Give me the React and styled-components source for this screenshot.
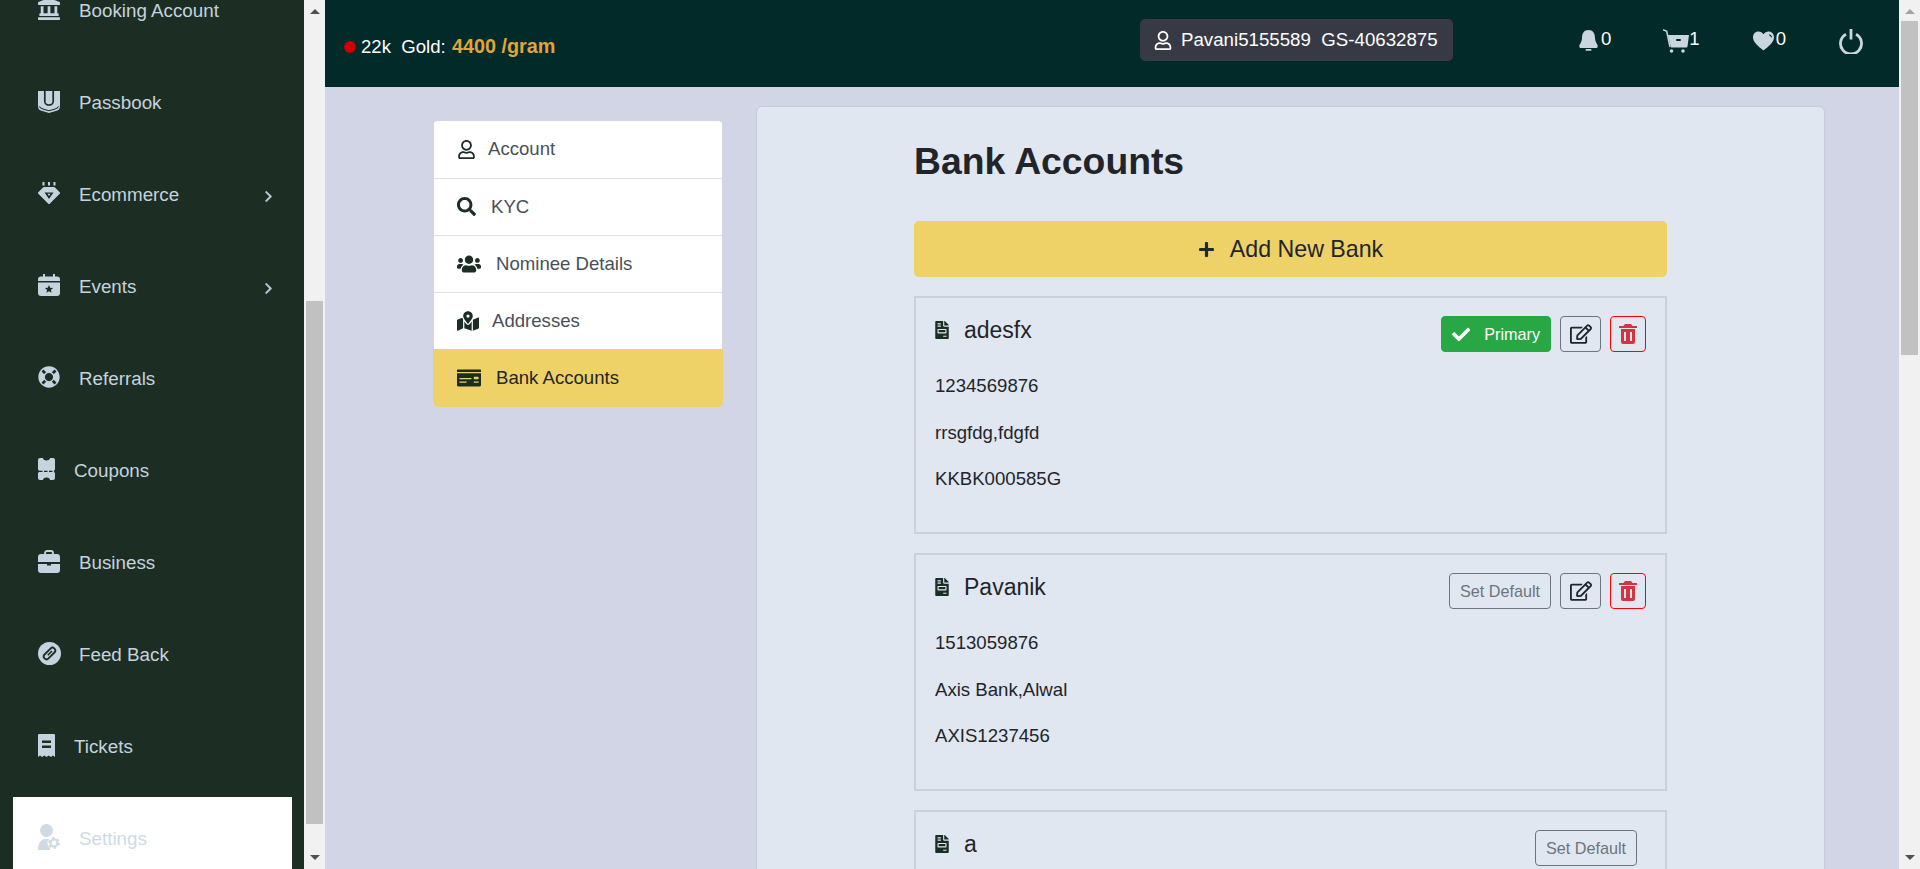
import React from 'react';
import styled, { createGlobalStyle } from 'styled-components';
import { BiSolidTrash } from 'react-icons/bi';
import {
  FaLandmark, FaLifeRing, FaChevronRight, FaRegUser, FaSearch, FaUsers, FaMapMarkedAlt, FaMoneyCheck,
  FaPlus, FaFileInvoice, FaCheck, FaRegEdit,
} from 'react-icons/fa';

const SIDE_BG = '#1c2e24';
const TOP_BG = '#012a29';

const GlobalStyle = createGlobalStyle`
  html, body { margin: 0; height: 100%; overflow: hidden; }
  body { font-family: "Liberation Sans", Arial, sans-serif; font-size: 18.6px; color: #212529; }
  * { box-sizing: border-box; }
`;

const Shell = styled.div`
  display: flex;
  height: 869px;
  overflow: hidden;
  background: #d2d5e6;
`;

const Sidebar = styled.aside`
  width: 304px;
  flex: none;
  height: 869px;
  overflow: hidden;
  background: ${SIDE_BG};
  padding: 0 12px 0 13px;
`;

const NavList = styled.ul`
  list-style: none;
  margin: -31px 0 0;
  padding: 0;
`;

const NavItem = styled.li`
  display: flex;
  align-items: center;
  height: 84px;
  margin-bottom: 8px;
  padding: 0 17px 0 25px;
  color: ${p => (p.$active ? '#d0dae4' : '#c6d2de')};
  background: ${p => (p.$active ? '#fff' : 'transparent')};
  font-size: 18.8px;
  span { flex: 1; }
  > svg { color: #b9c4cc; margin-top: 3px; }
`;

const NavIcon = styled.div`
  display: flex;
  flex: none;
  width: ${p => p.$w || 41}px;
  margin-top: -4px;
`;

const Bar = styled.div`
  width: 21px;
  flex: none;
  height: 869px;
  background: #f1f1f1;
  display: flex;
  flex-direction: column;
  align-items: center;
`;

const Arrow = styled.i`
  display: block;
  flex: none;
  width: 0;
  height: 0;
  margin: ${p => (p.$down ? '0 0 9px' : '9px 0 0')};
  border-left: 5px solid transparent;
  border-right: 5px solid transparent;
  ${p => (p.$down
    ? `border-top: 5px solid ${p.$color};`
    : `border-bottom: 5px solid ${p.$color};`)}
`;

const Thumb = styled.div`
  width: 17px;
  flex: none;
  height: ${p => p.$h}px;
  margin-top: ${p => p.$top}px;
  background: #c1c1c1;
`;

const Spacer = styled.div`
  flex: 1;
`;

const Main = styled.main`
  flex: 1;
  min-width: 0;
  height: 869px;
  overflow: hidden;
`;

const Header = styled.header`
  display: flex;
  height: 87px;
  background: ${TOP_BG};
  padding: 19px 0 0 19px;
  color: #fff;
`;

const Rate = styled.div`
  display: flex;
  align-items: center;
  width: 796px;
  height: 55px;
  white-space: pre;
`;

const Dot = styled.i`
  display: block;
  width: 12px;
  height: 12px;
  border-radius: 50%;
  background: #cc0000;
  margin-right: 5px;
`;

const Price = styled.b`
  color: #e0a43a;
  font-size: 19.8px;
  margin-left: 1px;
`;

const UserPill = styled.div`
  display: flex;
  align-items: center;
  gap: 9px;
  width: 313px;
  height: 42px;
  padding-left: 14px;
  border-radius: 5px;
  background: #373a45;
  font-size: 18.7px;
  white-space: pre;
  svg { width: 18px; height: 19px; }
`;

const Actions = styled.div`
  display: flex;
  align-items: flex-start;
  margin-left: 126px;
`;

const Action = styled.div`
  display: flex;
  align-items: center;
  height: 44px;
  gap: ${p => p.$gap || 0}px;
  margin-right: ${p => p.$mr || 0}px;
  color: #c9d5df;
`;

const Count = styled.span`
  color: #fff;
  margin-top: -4px;
`;

const Content = styled.div`
  display: flex;
  align-items: flex-start;
  padding: 20px 0 0 108px;
  gap: 34px;
`;

const SideMenu = styled.ul`
  list-style: none;
  width: 290px;
  margin: 14px 0 0;
  padding: 0;
  border-radius: 5px;
  overflow: hidden;
`;

const MenuRow = styled.li`
  display: flex;
  align-items: center;
  height: 57px;
  margin: 0 ${p => (p.$active ? 0 : 1)}px;
  padding: 0 0 1px ${p => (p.$active ? 24 : 23)}px;
  color: ${p => (p.$active ? '#212529' : '#495057')};
  background: ${p => (p.$active ? '#eed268' : '#fff')};
  border-bottom: ${p => (p.$active ? 'none' : '1px solid #dfdfe6')};
  &:first-child { height: 58px; }
  &:nth-child(4) { height: 56px; border-bottom: none; }
  &:last-child { height: 58px; }
`;

const MenuIcon = styled.span`
  display: flex;
  flex: none;
  width: ${p => p.$w}px;
  color: #1c2e24;
`;

const Panel = styled.section`
  width: 1067px;
  height: 900px;
  padding: 32px 157px 0;
  border-radius: 5px;
  background: #e1e7f0;
  box-shadow: 0 0 2px rgba(0, 0, 0, 0.15);
`;

const Title = styled.h1`
  margin: 0 0 38px;
  font-size: 37.3px;
  line-height: 44px;
  font-weight: 700;
`;

const AddButton = styled.button`
  display: flex;
  align-items: center;
  justify-content: center;
  gap: 15px;
  width: 100%;
  height: 56px;
  margin-bottom: 19px;
  border: none;
  border-radius: 5px;
  background: #eed268;
  color: #212529;
  font: inherit;
  font-size: 23.2px;
  svg { color: #1c2e24; }
`;

const Card = styled.article`
  border: 2px solid #ccd0d9;
  padding: 18px 19px 20px;
  margin-bottom: 19px;
  height: 238px;
`;

const CardHead = styled.div`
  display: flex;
  align-items: flex-start;
  height: 36px;
  margin-bottom: 20px;
`;

const CardName = styled.div`
  display: flex;
  align-items: center;
  flex: 1;
  gap: 15px;
  height: 28px;
  font-size: 23px;
  svg { color: #1c2e24; width: 14px; height: 18px; }
`;

const Btn = styled.button`
  display: flex;
  align-items: center;
  justify-content: center;
  gap: 14px;
  height: 36px;
  padding: 0 10px;
  margin-right: ${p => (p.$last ? 0 : 9)}px;
  border: 1px solid #6c757d;
  border-radius: 4px;
  background: transparent;
  color: #6c757d;
  font: inherit;
  font-size: 16.2px;
`;

const PrimaryBtn = styled(Btn)`
  width: 110px;
  border-color: #28a745;
  background: #28a745;
  color: #fff;
`;

const EditBtn = styled(Btn)`
  width: 41px;
  padding: 0;
  color: #212529;
`;

const TrashBtn = styled(Btn)`
  width: 36px;
  padding: 0;
  border-color: #f00;
  color: #d4333f;
`;

const Line = styled.p`
  margin: 0 0 19px;
  line-height: 27.6px;
`;

const Passbook = () => (
  <svg width="22" height="23" viewBox="0 0 22 23">
    <path fill="currentColor" d="M0 1h22v15c0 3-1.5 4-3.5 4.8L11 23l-7.5-2.2C1.5 20 0 19 0 16z" />
    <path fill="none" stroke={SIDE_BG} strokeWidth="1.7" d="M6.8 0v11.5c0 2 2.2 3.5 4.2 3.5s4.2-1.5 4.2-3.5V0" />
    <path fill="none" stroke={SIDE_BG} strokeWidth="1.1" d="M1.3 16.5c1 1.5 2.2 2.2 4.2 2.7l5.5 1.6 5.5-1.6c2-.5 3.2-1.2 4.2-2.7" />
  </svg>
);

const Gem = () => (
  <svg width="22" height="22" viewBox="0 0 22 22">
    <rect x="4.5" y="0" width="2" height="3.5" fill="currentColor" />
    <rect x="10" y="0" width="2" height="3.5" fill="currentColor" />
    <rect x="15.5" y="0" width="2" height="3.5" fill="currentColor" />
    <path fill="currentColor" stroke="currentColor" strokeLinejoin="round" strokeWidth="2" d="M6 6h10l5 5-10 10L1 11z" />
    <path fill={SIDE_BG} d="M6.5 10.5h9L11 17z" />
    <path fill="currentColor" d="M9.5 11.8h3L11 14z" />
  </svg>
);

const CalendarStar = () => (
  <svg width="22" height="22" viewBox="0 0 22 22">
    <path fill="currentColor" d="M5 0h2v2.5h8V0h2v2.5h2a3 3 0 0 1 3 3V7H0V5.500a3 3 0 0 1 3-3h2z" />
    <path fill="currentColor" d="M0 8.500h22V19a3 3 0 0 1-3 3H3a3 3 0 0 1-3-3z" />
    <path fill={SIDE_BG} d="M11 11l1.200 2.700 2.900.3-2.200 1.900.7 2.900-2.600-1.500-2.600 1.500.7-2.900L6.900 14l2.900-.3z" />
  </svg>
);

const CouponTicket = () => (
  <svg width="17" height="22" viewBox="0 0 17 22">
    <path fill="currentColor" d="M2 0h3c0 1.500 1.300 2.500 3.500 2.500S12 1.500 12 0h3a2 2 0 0 1 2 2v9.500a2 2 0 0 0 0 3.500V20a2 2 0 0 1-2 2h-3c0-1.500-1.300-2.500-3.500-2.500S5 20.500 5 22H2a2 2 0 0 1-2-2v-5a2 2 0 0 0 0-3.500V2a2 2 0 0 1 2-2z" />
    <path stroke={SIDE_BG} strokeWidth="1.300" strokeDasharray="3.500 1.500" d="M1 13.300h15" />
  </svg>
);

const Briefcase = () => (
  <svg width="22" height="23" viewBox="0 0 22 23">
    <path fill="none" stroke="currentColor" strokeWidth="1.800" d="M7 5V3a2 2 0 0 1 2-2h4a2 2 0 0 1 2 2v2" />
    <path fill="currentColor" d="M3 4h16a3 3 0 0 1 3 3v5H0V7a3 3 0 0 1 3-3zM0 14h9v1.500h4V14h9v6a3 3 0 0 1-3 3H3a3 3 0 0 1-3-3z" />
  </svg>
);

const ClipBadge = () => (
  <svg width="23" height="23" viewBox="0 0 23 23">
    <circle cx="11.500" cy="11.500" r="11.500" fill="currentColor" />
    <g transform="rotate(45 11.500 11.500)">
      <rect x="8.700" y="4.500" width="5.600" height="14" rx="2.800" fill="none" stroke={SIDE_BG} strokeWidth="1.800" />
      <path stroke={SIDE_BG} strokeWidth="1.600" d="M11.500 8v6" />
    </g>
  </svg>
);

const Receipt = () => (
  <svg width="17" height="23" viewBox="0 0 17 23">
    <path fill="currentColor" d="M1 0h15a1 1 0 0 1 1 1v22l-2-1.500-2 1.500-2.300-1.500L8.500 23l-2.200-1.500L4 23l-2-1.500L0 23V1a1 1 0 0 1 1-1z" />
    <rect x="4" y="6.500" width="9" height="2.500" fill={SIDE_BG} />
    <rect x="4" y="11.500" width="9" height="2.500" fill={SIDE_BG} />
  </svg>
);

const UserGear = () => (
  <svg width="22" height="26" viewBox="0 0 22 26">
    <circle cx="8.500" cy="6.500" r="6.500" fill="currentColor" />
    <path fill="currentColor" d="M0 26c0-7 3-11 7-11h4l1 11z" />
    <circle cx="16" cy="19" r="6.500" fill="#fff" />
    <circle cx="16" cy="19" r="3.500" fill="none" stroke="currentColor" strokeWidth="2.200" />
    <circle cx="16" cy="19" r="5" fill="none" stroke="currentColor" strokeWidth="2" strokeDasharray="2.600 2.630" />
  </svg>
);

const Bell = () => (
  <svg width="19" height="22" viewBox="0 0 19 22">
    <path fill="currentColor" d="M9.500 0C5 0 3 3.500 3 8c0 3-1.500 5-2.500 7C0 16.500.5 18 1.500 18h16c1 0 1.500-1.500 1-3C17.500 13 16 11 16 8c0-4.500-2-8-6.500-8z" />
    <rect x="6.500" y="19" width="6" height="1.800" rx=".9" fill="currentColor" />
  </svg>
);

const Cart = () => (
  <svg width="26" height="24" viewBox="0 0 26 24">
    <path fill="none" stroke="currentColor" strokeWidth="1.500" d="M0 .8l3.700 1.500L7 18" />
    <path fill="currentColor" d="M5 6h21l-1.500 11.500a1 1 0 0 1-1 1H8z" />
    <rect x="13" y="10" width="5" height="2" rx="1" fill={TOP_BG} />
    <circle cx="8.500" cy="22" r="1.800" fill="currentColor" />
    <circle cx="20" cy="22" r="1.800" fill="currentColor" />
  </svg>
);

const Heart = () => (
  <svg width="21" height="20" viewBox="0 0 22 20">
    <path fill="currentColor" d="M11 20C5 15 0 11 0 6c0-3.500 2.500-6 5.500-6C8 0 10 1.300 11 3c1-1.700 3-3 5.500-3C19.500 0 22 2.500 22 6c0 5-5 9-11 14z" />
    <path fill="none" stroke={TOP_BG} strokeWidth="1.200" d="M16.800 3.500c1.500.3 2.400 1.200 2.700 2.700" />
  </svg>
);

const Power = () => (
  <svg width="24" height="25" viewBox="0 0 24 25">
    <path fill="none" stroke="currentColor" strokeWidth="2.800" d="M7 5.200a10.500 10.500 0 1 0 10 0" />
    <path stroke="currentColor" strokeWidth="2.800" d="M12 0v10.500" />
  </svg>
);

const nav = [
  { icon: <FaLandmark size={22} />, label: 'Booking Account' },
  { icon: <Passbook />, label: 'Passbook' },
  { icon: <Gem />, label: 'Ecommerce', more: true },
  { icon: <CalendarStar />, label: 'Events', more: true },
  { icon: <FaLifeRing size={22} />, label: 'Referrals' },
  { icon: <CouponTicket />, w: 36, label: 'Coupons' },
  { icon: <Briefcase />, label: 'Business' },
  { icon: <ClipBadge />, label: 'Feed Back' },
  { icon: <Receipt />, w: 36, label: 'Tickets' },
  { icon: <UserGear />, label: 'Settings', active: true },
];

const menu = [
  { icon: <FaRegUser size={19} />, w: 31, label: 'Account' },
  { icon: <FaSearch size={19} />, w: 34, label: 'KYC' },
  { icon: <FaUsers size={24} />, w: 39, label: 'Nominee Details' },
  { icon: <FaMapMarkedAlt size={22} />, w: 35, label: 'Addresses' },
  { icon: <FaMoneyCheck size={24} />, w: 39, label: 'Bank Accounts', active: true },
];

const banks = [
  { name: 'adesfx', lines: ['1234569876', 'rrsgfdg,fdgfd', 'KKBK000585G'], primary: true, tools: true },
  { name: 'Pavanik', lines: ['1513059876', 'Axis Bank,Alwal', 'AXIS1237456'], tools: true },
  { name: 'a', lines: [] },
];

function BankCard({ bank }) {
  return (
    <Card>
      <CardHead>
        <CardName><FaFileInvoice />{bank.name}</CardName>
        {bank.primary
          ? <PrimaryBtn><FaCheck size={19} />Primary</PrimaryBtn>
          : <Btn>Set Default</Btn>}
        {bank.tools && <EditBtn><FaRegEdit size={22} /></EditBtn>}
        {bank.tools && <TrashBtn $last><BiSolidTrash size={24} /></TrashBtn>}
      </CardHead>
      {bank.lines.map(l => <Line key={l}>{l}</Line>)}
    </Card>
  );
}

export default function App() {
  return (
    <Shell>
      <GlobalStyle />
      <Sidebar>
        <NavList>
          {nav.map(n => (
            <NavItem key={n.label} $active={n.active}>
              <NavIcon $w={n.w}>{n.icon}</NavIcon>
              <span>{n.label}</span>
              {n.more && <FaChevronRight size={13} />}
            </NavItem>
          ))}
        </NavList>
      </Sidebar>
      <Bar>
        <Arrow $color="#505050" />
        <Thumb $top={287} $h={523} />
        <Spacer />
        <Arrow $down $color="#505050" />
      </Bar>
      <Main>
        <Header>
          <Rate><Dot />22k  Gold: <Price>4400 /gram</Price></Rate>
          <UserPill><FaRegUser /><span>Pavani5155589  GS-40632875</span></UserPill>
          <Actions>
            <Action $gap={3} $mr={52}><Bell /><Count>0</Count></Action>
            <Action $mr={53}><Cart /><Count>1</Count></Action>
            <Action $gap={2} $mr={53}><Heart /><Count>0</Count></Action>
            <Action><Power /></Action>
          </Actions>
        </Header>
        <Content>
          <SideMenu>
            {menu.map(m => (
              <MenuRow key={m.label} $active={m.active}>
                <MenuIcon $w={m.w}>{m.icon}</MenuIcon>
                {m.label}
              </MenuRow>
            ))}
          </SideMenu>
          <Panel>
            <Title>Bank Accounts</Title>
            <AddButton><FaPlus size={17} />Add New Bank</AddButton>
            {banks.map(b => <BankCard key={b.name} bank={b} />)}
          </Panel>
        </Content>
      </Main>
      <Bar>
        <Arrow $color="#a3a3a3" />
        <Thumb $top={7} $h={334} />
        <Spacer />
        <Arrow $down $color="#505050" />
      </Bar>
    </Shell>
  );
}
